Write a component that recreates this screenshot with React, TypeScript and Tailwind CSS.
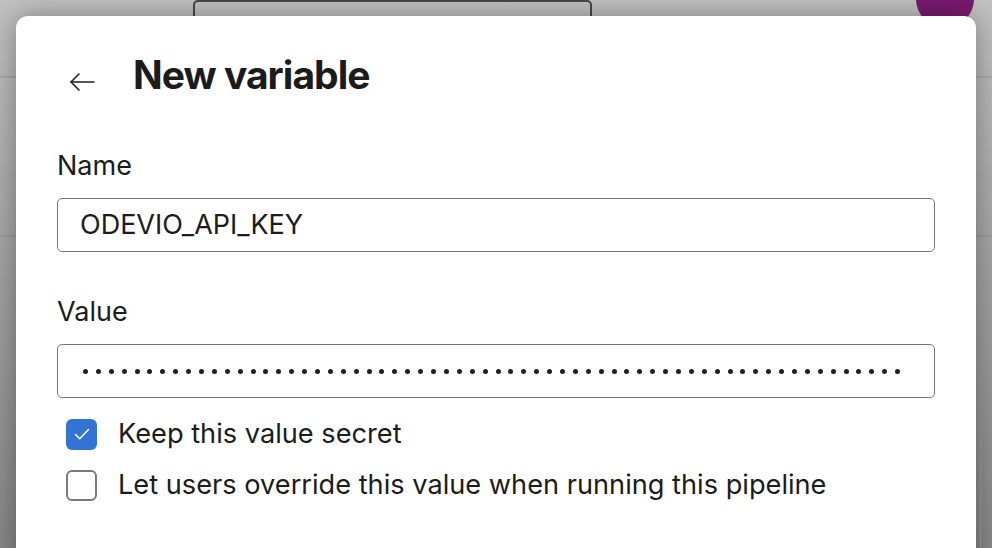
import React from "react";

const DOTS = Array.from({ length: 64 });

function BackArrow() {
  return (
    <svg width="26" height="20" viewBox="0 0 26 20" fill="none" stroke="#1f1f1f" strokeWidth="1.6" strokeLinecap="round" strokeLinejoin="round">
      <path d="M25 10H2" />
      <path d="M10 2L2 10l8 8" />
    </svg>
  );
}

function CheckBox({ checked }: { checked: boolean }) {
  if (checked) {
    return (
      <div className="w-[31px] h-[31px] rounded-[6px] bg-[#3174d5] flex items-center justify-center shrink-0">
        <svg width="18" height="14" viewBox="0 0 18 14" fill="none" stroke="white" strokeWidth="1.6" strokeLinecap="round" strokeLinejoin="round">
          <path d="M2.5 7.5l4.2 4.2L15.5 2.5" />
        </svg>
      </div>
    );
  }
  return <div className="w-[31px] h-[31px] rounded-[6px] border-2 border-[#7a7a7a] bg-white shrink-0" />;
}

export default function App() {
  return (
    <div
      className="relative w-[992px] h-[548px] overflow-hidden bg-gradient-to-b from-[#c2c2c2] via-[#a2a2a2] to-[#878787]"
      style={{ fontFamily: "Inter, 'Noto Sans', sans-serif" }}
    >
      {/* page behind the dialog */}
      <div className="absolute left-0 right-0 top-[76px] h-[2px] bg-[#a9a9a9]" />
      <div className="absolute left-0 right-0 top-[235px] h-[2px] bg-[#9c9c9c]" />
      <div className="absolute left-[193px] top-0 w-[399px] h-[40px] rounded-[5px] border-2 border-[#474747]" />
      <div className="absolute left-[916px] top-[-30px] w-[58px] h-[58px] rounded-full bg-[#7a1a70]" />
      <div className="absolute left-[980px] top-[366px] w-[40px] h-[200px] border border-[#9a9a9a]" />

      {/* dialog */}
      <div className="absolute left-[16px] top-[16px] w-[960px] h-[560px] bg-white rounded-t-[12px] shadow-[0_0_28px_rgba(0,0,0,0.35)] pl-[41px] pr-[41px] pt-[35px] text-[#1c1c1c]">
        <div className="flex items-start">
          <div className="ml-[12px] mt-[21px] w-[26px]">
            <BackArrow />
          </div>
          <h1 className="ml-[38px] text-[39px] leading-[48px] font-bold tracking-[-0.025em] text-[#1b1b1b]">New variable</h1>
        </div>

        <div className="mt-[51px] text-[27px] leading-[32px]">Name</div>
        <div className="mt-[16px] h-[54px] w-[878px] rounded-[5px] border-[1.5px] border-[#767676] flex items-center pl-[22px] text-[27px]">
          ODEVIO_API_KEY
        </div>

        <div className="mt-[44px] text-[27px] leading-[32px]">Value</div>
        <div className="mt-[16px] h-[54px] w-[878px] rounded-[5px] border-[1.5px] border-[#767676] flex items-center pl-[25px] gap-[7.9px]">
          {DOTS.map((_, i) => (
            <div key={i} className="w-[5px] h-[5px] rounded-full bg-[#1f1f1f] shrink-0" />
          ))}
        </div>

        <div className="mt-[20px] ml-[9px] flex items-center gap-[21px] h-[32px]">
          <CheckBox checked />
          <span className="text-[27.2px]">Keep this value secret</span>
        </div>
        <div className="mt-[19px] ml-[9px] flex items-center gap-[21px] h-[32px]">
          <CheckBox checked={false} />
          <span className="text-[27.2px]">Let users override this value when running this pipeline</span>
        </div>
      </div>
    </div>
  );
}
